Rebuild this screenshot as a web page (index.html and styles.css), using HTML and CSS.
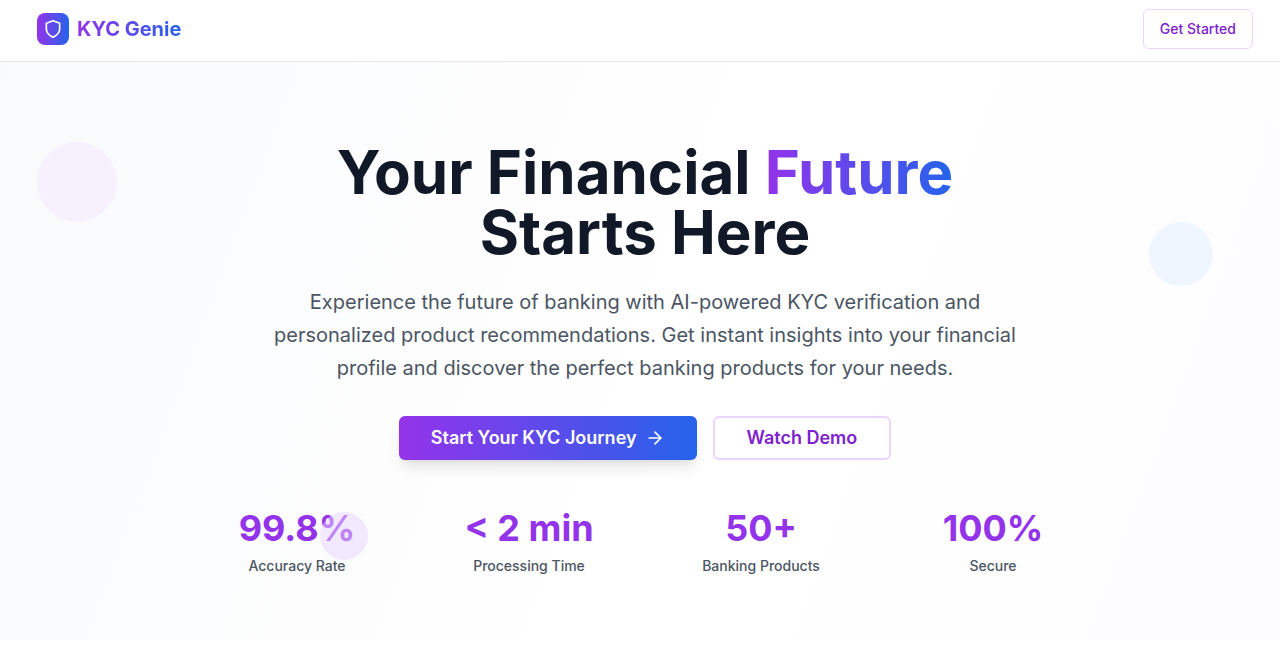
FILE: index.html
```html
<!DOCTYPE html>
<html lang="en">
<head>
<meta charset="utf-8">
<meta name="viewport" content="width=device-width, initial-scale=1">
<title>KYC Genie</title>
<link rel="stylesheet" href="styles.css">
</head>
<body>
<header class="header">
  <div class="container header-row">
    <a class="brand" href="#">
      <span class="brand-mark">
        <svg width="20" height="20" viewBox="0 0 24 24" fill="none" stroke="currentColor" stroke-width="2" stroke-linecap="round" stroke-linejoin="round" aria-hidden="true"><path d="M12 22s8-4 8-10V5l-8-3-8 3v7c0 6 8 10 8 10"/></svg>
      </span>
      <span class="brand-name gradient-text">KYC Genie</span>
    </a>
    <button class="btn btn-small" type="button">Get Started</button>
  </div>
</header>
<main class="hero">
  <div class="container hero-inner">
    <h1 class="title">Your Financial <span class="gradient-text">Future</span><br>Starts Here</h1>
    <p class="lead">Experience the future of banking with AI-powered KYC verification and personalized product recommendations. Get instant insights into your financial profile and discover the perfect banking products for your needs.</p>
    <div class="actions">
      <button class="btn btn-large btn-primary" type="button">Start Your KYC Journey
        <svg width="20" height="20" viewBox="0 0 24 24" fill="none" stroke="currentColor" stroke-width="2" stroke-linecap="round" stroke-linejoin="round" aria-hidden="true"><path d="M5 12h14"/><path d="m12 5 7 7-7 7"/></svg>
      </button>
      <button class="btn btn-large btn-outline" type="button">Watch Demo</button>
    </div>
    <dl class="stats">
      <div class="stat"><dd>99.8%</dd><dt>Accuracy Rate</dt></div>
      <div class="stat"><dd>&lt; 2 min</dd><dt>Processing Time</dt></div>
      <div class="stat"><dd>50+</dd><dt>Banking Products</dt></div>
      <div class="stat"><dd>100%</dd><dt>Secure</dt></div>
    </dl>
    <span class="orb orb-left"></span>
    <span class="orb orb-right"></span>
    <span class="orb orb-bottom"></span>
  </div>
</main>
</body>
</html>
```
FILE: styles.css
```css
*, *::before, *::after { box-sizing: border-box; }

body {
  margin: 0;
  background: #fff;
  color: #111827;
  font-family: Inter, "Liberation Sans", sans-serif;
}

.container {
  padding-left: 37px;
  padding-right: 27px;
}

.header {
  padding: 9px 0 12px;
  background: #fff;
  border-bottom: 1px solid #e5e7eb;
}

.header-row,
.brand,
.brand-mark,
.btn,
.actions {
  display: flex;
  align-items: center;
}

.header-row { justify-content: space-between; }

.brand {
  gap: 8px;
  text-decoration: none;
}

.brand-mark {
  justify-content: center;
  width: 32px;
  height: 32px;
  border-radius: 8px;
  background: linear-gradient(to right, #9333ea, #2563eb);
  color: #fff;
}

.brand-name {
  font-size: 20px;
  line-height: 28px;
  font-weight: 700;
}

.gradient-text {
  background: linear-gradient(to right, #9333ea, #2563eb);
  -webkit-background-clip: text;
  background-clip: text;
  color: transparent;
}

.btn {
  justify-content: center;
  border: 0;
  border-radius: 6px;
  background: #fff;
  color: #7e22ce;
  font-family: inherit;
  white-space: nowrap;
  cursor: pointer;
}

.btn-small {
  height: 40px;
  padding: 0 16px;
  border: 1px solid #e9d5ff;
  font-size: 14px;
  line-height: 20px;
  font-weight: 500;
}

.btn-large {
  height: 44px;
  padding: 0 32px;
  font-size: 18px;
  line-height: 28px;
  font-weight: 600;
}

.btn-primary {
  gap: 8px;
  background: linear-gradient(to right, #9333ea, #2563eb);
  color: #fff;
  box-shadow: 0 10px 15px -3px rgba(0, 0, 0, 0.1), 0 4px 6px -4px rgba(0, 0, 0, 0.1);
}

.btn-outline { border: 2px solid #e9d5ff; }

.hero { background: linear-gradient(110deg, #f9fafc, #fff 55%, #fdfdff); }

.hero-inner {
  position: relative;
  display: flex;
  flex-direction: column;
  align-items: center;
  padding-top: 80px;
  padding-bottom: 64px;
  text-align: center;
}

.title {
  margin: 0 0 24px;
  font-size: 60px;
  line-height: 60px;
  font-weight: 700;
}

.lead {
  max-width: 768px;
  margin: 0 0 31px;
  color: #4b5563;
  font-size: 20px;
  line-height: 33px;
}

.actions {
  flex-wrap: wrap;
  justify-content: center;
  gap: 16px;
}

.stats {
  display: grid;
  grid-template-columns: repeat(4, 1fr);
  gap: 32px;
  width: 100%;
  max-width: 896px;
  margin: 48px 0 0;
}

.stat dd {
  margin: 0 0 8px;
  color: #9333ea;
  font-size: 36px;
  line-height: 40px;
  font-weight: 700;
}

.stat dt {
  color: #4b5563;
  font-size: 14px;
  line-height: 20px;
  font-weight: 500;
}

.orb {
  position: absolute;
  border-radius: 50%;
  pointer-events: none;
}

.orb-left {
  top: 80px;
  left: 37px;
  width: 80px;
  height: 80px;
  background: #f3e8ff;
  opacity: 0.5;
}

.orb-right {
  top: 160px;
  right: 67px;
  width: 64px;
  height: 64px;
  background: #dbeafe;
  opacity: 0.4;
}

.orb-bottom {
  bottom: 80px;
  left: 25%;
  width: 48px;
  height: 48px;
  background: #e9d5ff;
  opacity: 0.5;
}
```
